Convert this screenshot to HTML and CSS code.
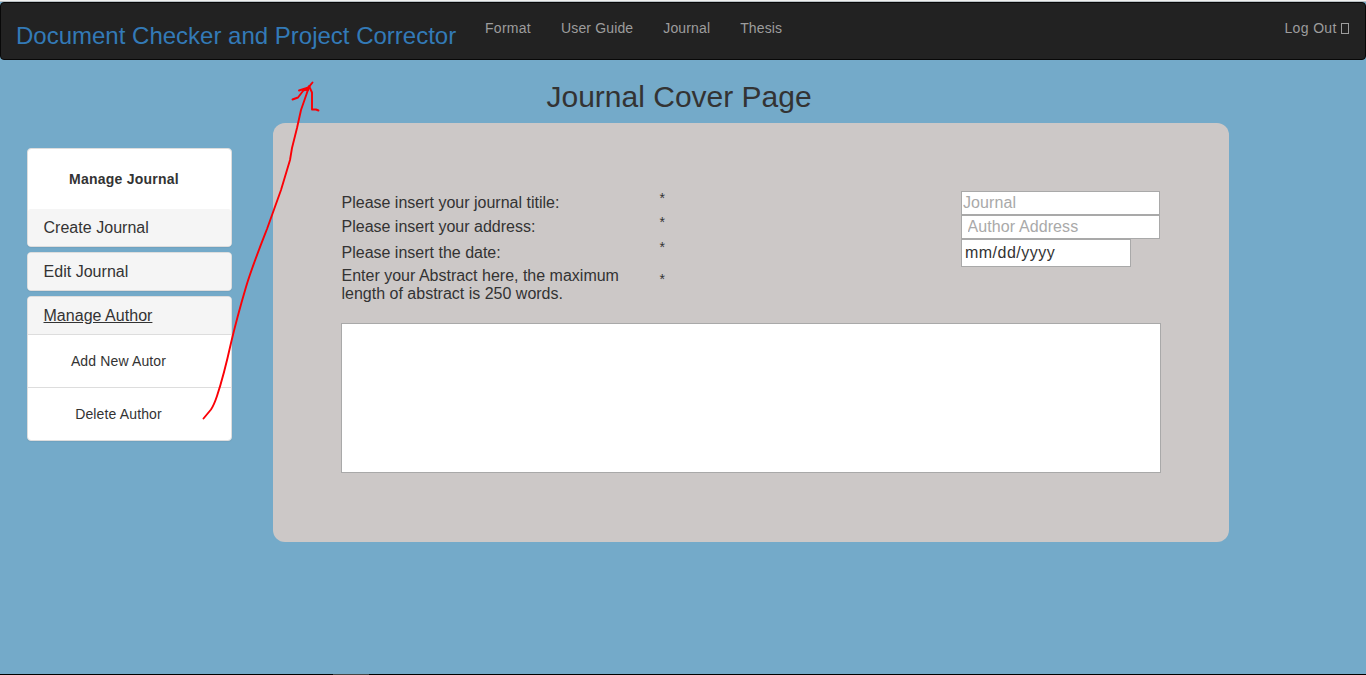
FILE: index.html
```html
<!DOCTYPE html>
<html lang="en">
<head>
<meta charset="utf-8">
<title>Journal Cover Page</title>
<link rel="stylesheet" href="styles.css">
</head>
<body>
<div class="top-edge"></div>
<nav class="navbar">
  <a class="brand">Document Checker and Project Corrector</a>
  <ul class="menu">
    <li class="wide">Format</li>
    <li>User Guide</li>
    <li>Journal</li>
    <li>Thesis</li>
  </ul>
  <div class="logout">Log Out <i class="glyph"></i></div>
</nav>
<div class="layout">
  <aside class="sidebar">
    <section class="panel">
      <div class="panel-title"><span>Manage Journal</span></div>
      <div class="panel-heading rounded"><span>Create Journal</span></div>
    </section>
    <section class="panel">
      <div class="panel-heading"><span>Edit Journal</span></div>
    </section>
    <section class="panel">
      <div class="panel-heading"><span class="current">Manage Author</span></div>
      <div class="panel-item"><span>Add New Autor</span></div>
      <div class="panel-item"><span>Delete Author</span></div>
    </section>
  </aside>
  <main class="content">
    <h2 class="title"><span>Journal Cover Page</span></h2>
    <form class="card">
      <div class="row">
        <label>Please insert your journal titile:</label><span class="star">*</span>
        <input class="field" type="text" placeholder="Journal">
      </div>
      <div class="row">
        <label>Please insert your address:</label><span class="star">*</span>
        <input class="field address" type="text" placeholder="Author Address">
      </div>
      <div class="row date-row">
        <label>Please insert the date:</label><span class="star">*</span>
        <input class="field date" type="text" value="mm/dd/yyyy">
      </div>
      <div class="row abstract-row">
        <label>Enter your Abstract here, the maximum<br>length of abstract is 250 words.</label><span class="star">*</span>
      </div>
      <textarea class="abstract"></textarea>
    </form>
  </main>
</div>
<div class="taskbar"><i class="task"></i></div>
<svg class="arrow" width="130" height="350" viewBox="200 75 130 350" fill="none" stroke="#fb0006" stroke-width="1.9" stroke-linecap="round" stroke-linejoin="round">
  <path d="M203.500 418.500L211 409.500Q214 405 217 396C221 384 227 361 231 343C235 326 241 304 246 287C252 267 260 247 267 229L281 190L290 160L292 148L297 128L301 110L309 87"/>
  <path d="M312.500 82.500L308.500 87.500L299 90.500M309 87L303 91L298 97.500L292.500 99.500M309 86L312 92.500L312 109.500L316 109.500L318.500 110.500"/>
  <path d="M311 84L308 91L304 90L309 86Z" fill="#fb0006" stroke-width="1"/>
</svg>
</body>
</html>
```
FILE: styles.css
```css
* { box-sizing: border-box; }
body {
  margin: 0;
  height: 675px;
  overflow: hidden;
  display: flex;
  flex-direction: column;
  background: #74aac9;
  color: #333;
  font: 14px/20px "Liberation Sans", Arial, sans-serif;
}
.top-edge { height: 2px; flex: none; background: #f0f0f0; border-bottom: 1px solid #b9c0c4; }
.navbar {
  flex: none;
  display: flex;
  height: 58px;
  padding: 0 16px 0 15px;
  background: #222;
  border: 1px solid #080808;
  border-radius: 4px;
  color: #9d9d9d;
}
.brand { width: 469px; padding-top: 19px; color: #337ab7; font-size: 24px; line-height: 28px; white-space: nowrap; }
.menu { display: flex; gap: 30px; margin: 0; padding: 15px 0 0; list-style: none; letter-spacing: .14px; }
.wide { letter-spacing: .28px; }
.logout { margin-left: auto; padding-top: 15px; white-space: pre; letter-spacing: .35px; }
.glyph { display: inline-block; width: 8px; height: 11px; border: 1px solid #9d9d9d; vertical-align: -1px; }
.layout { flex: 1; display: flex; gap: 41px; padding-left: 27px; }
.sidebar { width: 205px; padding-top: 88px; display: flex; flex-direction: column; gap: 5px; }
.panel {
  background: #fff;
  border: 1px solid #ddd;
  border-radius: 4px;
  box-shadow: 0 1px 1px rgba(0, 0, 0, .05);
  overflow: hidden;
}
.panel-title { height: 60px; padding: 20px 0 0 41px; font-weight: bold; letter-spacing: .24px; }
.panel-heading { height: 37px; padding: 10px 15px 8px 15.5px; background: #f5f5f5; font-size: 16px; line-height: 18px; letter-spacing: .03px; }
.rounded { border-radius: 3px 3px 0 0; }
.current { text-decoration: underline; }
.panel-item { height: 53px; padding-top: 16px; border-top: 1px solid #ddd; text-align: center; padding-right: 22px; letter-spacing: .14px; }
.content { width: 956px; }
.title { margin: 0; padding: 20px 0 0 273.5px; height: 63px; font-size: 30px; font-weight: normal; line-height: 33px; }
.card { height: 419px; padding: 68px; background: #ccc8c7; border-radius: 12px; }
.row { display: grid; grid-template-columns: 318px 302px 200px; height: 24px; font-size: 16px; line-height: 18px; }
.row label { padding-top: 3px; padding-left: .5px; white-space: nowrap; }
.star { padding-left: .5px; font-size: 14px; line-height: 14px; }
.date-row { height: 28px; }
.date-row label { padding-top: 5px; }
.date-row .star { padding-top: 1px; }
.abstract-row { height: 56px; }
.abstract-row label { padding-top: 0; }
.abstract-row .star { padding-top: 5px; }
.field {
  width: 199px;
  height: 24px;
  padding: 0 1px;
  border: 1px solid #a9a9a9;
  background: #fff;
  color: #333;
  font: 16px "Liberation Sans", Arial, sans-serif;
  letter-spacing: .1px;
}
.field::placeholder { color: #a9a9a9; opacity: 1; }
.address { padding-left: 5.5px; }
.date { width: 170px; height: 28px; padding-left: 3px; letter-spacing: .48px; }
.abstract { display: block; width: 820px; height: 150px; border: 1px solid #a9a9a9; resize: none; background: #fff; }
.taskbar { flex: none; height: 1px; background: #000; padding-left: 333px; }
.task { display: block; width: 36px; height: 1px; background: #444; }
.arrow { position: absolute; left: 200px; top: 75px; }
```
